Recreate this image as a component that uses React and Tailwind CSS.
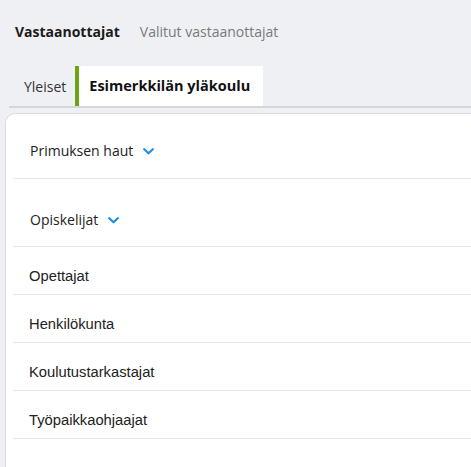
import React from 'react';

const openSans = { fontFamily: '"Open Sans", "Liberation Sans", sans-serif' };

function Chevron() {
  return (
    <svg width="11" height="7" viewBox="0 0 11 7" className="ml-[10px] mt-[1px]">
      <path d="M1.2 1.2 L5.5 5.3 L9.8 1.2" fill="none" stroke="#1a8fe3" strokeWidth="2.2" strokeLinecap="round" strokeLinejoin="round" />
    </svg>
  );
}

const groups = [
  { label: 'Primuksen haut', h: 'h-[58px]', mt: 'mt-[7px]' },
  { label: 'Opiskelijat', h: 'h-[56px]', mt: 'mt-[12px]' },
];

const items = ['Opettajat', 'Henkilökunta', 'Koulutustarkastajat', 'Työpaikkaohjaajat'];

export default function App() {
  return (
    <div className="w-[471px] h-[467px] overflow-hidden bg-[#eff0f4] flex flex-col">
      {/* Top tabs */}
      <div className="flex items-center gap-[20px] pl-[15px] h-[62px] text-[14px]" style={openSans}>
        <span className="font-bold text-[#1b1b1b]">Vastaanottajat</span>
        <span className="text-[#7a7a7a]">Valitut vastaanottajat</span>
      </div>

      {/* School tabs */}
      <div className="ml-[9px] mt-[4px] flex items-stretch h-[42px] border-b-2 border-[#d6d6d8]" style={openSans}>
        <div className="flex items-center pl-[15px] pr-[9px] text-[14px] text-[#333]">Yleiset</div>
        <div className="flex items-center bg-white border-l-4 border-[#6ca512] pl-[10px] pr-[13px] text-[14.5px] font-bold text-[#111]">
          Esimerkkilän yläkoulu
        </div>
      </div>

      {/* Card */}
      <div className="ml-[5px] mt-[5px] flex-1 bg-white border-l border-t border-[#dcdde1] rounded-tl-[10px] pl-[7px]">
        {groups.map((g) => (
          <div key={g.label} className={`${g.mt} ${g.h} flex items-center pl-[17px] pt-[2px] border-b border-[#e6e8ea] text-[14px] text-[#222]`} style={openSans}>
            {g.label}
            <Chevron />
          </div>
        ))}
        {items.map((it) => (
          <div
            key={it}
            className="mt-[12px] h-[36px] flex items-center pl-[16px] border-b border-[#e6e8ea] text-[14.75px] text-[#222]"
            style={{ fontFamily: '"Liberation Sans", Arial, sans-serif' }}
          >
            {it}
          </div>
        ))}
      </div>
    </div>
  );
}
